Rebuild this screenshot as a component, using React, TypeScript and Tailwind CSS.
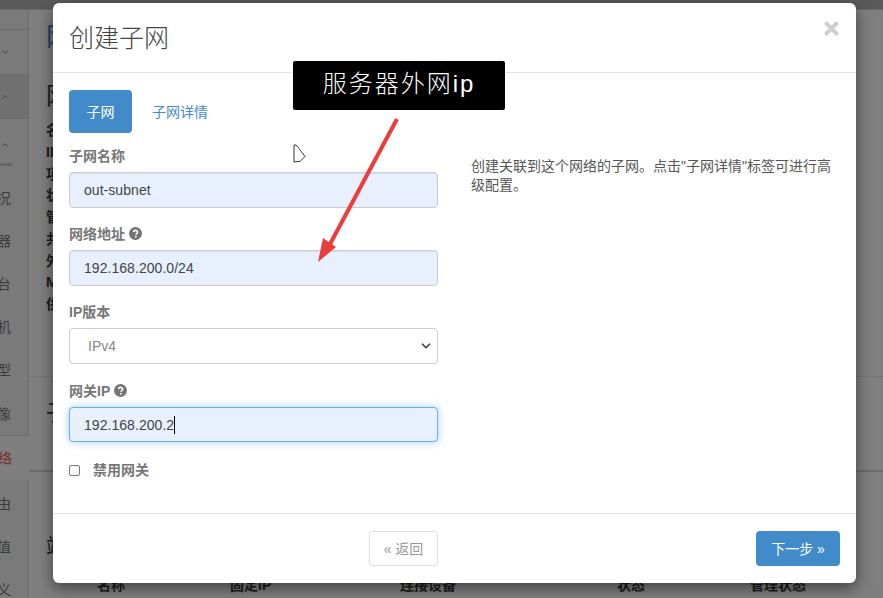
import React from 'react';
import { ChevronDown, ChevronUp } from 'lucide-react';

const font = 'font-["Liberation_Sans","Noto_Sans_CJK_SC",sans-serif]';

function HelpIcon() {
  return (
    <svg className="ml-1 inline-block h-[13px] w-[13px] align-[-1px]" viewBox="0 0 24 24">
      <circle cx="12" cy="12" r="12" fill="#737373" />
      <path d="M8.2 9.2a3.9 3.9 0 0 1 7.700.5c0 2.600-3 2.600-3 4.800" fill="none" stroke="#fff" strokeWidth="3" />
      <rect x="11" y="16.500" width="3" height="3" fill="#fff" />
    </svg>
  );
}

function Label({ text, help }: { text: string; help?: boolean }) {
  return (
    <label className="mb-[6px] block h-[20px] text-sm leading-[20px] font-bold text-[#777]">
      {text}
      {help && <HelpIcon />}
    </label>
  );
}

function Field({ label, help, value, focused }: { label: string; help?: boolean; value: string; focused?: boolean }) {
  return (
    <div className="mb-[16px]">
      <Label text={label} help={help} />
      <div
        className={
          focused
            ? 'flex h-[35px] items-center rounded-[4px] border border-[#66afe9] bg-[#e8f0fe] px-[14px] text-sm tracking-[0.05px] text-[#444] shadow-[0_0_8px_rgba(102,175,233,0.6)]'
            : 'flex h-[36px] items-center rounded-[4px] border border-[#ccc] bg-[#e8f0fe] px-[14px] text-sm tracking-[0.05px] text-[#444] shadow-[inset_0_1px_1px_rgba(0,0,0,0.075)]'
        }
      >
        {value}
        {focused && <span className="h-[18px] w-px bg-black" />}
      </div>
    </div>
  );
}

function Sidebar() {
  const items = ['概况', '服务器', '控制台', '云主机', '类型', '镜像'];
  const lower = ['路由', '配额值', '自定义'];
  return (
    <div className="flex w-[29px] shrink-0 flex-col overflow-hidden text-sm text-[#3c3c3c]">
      <div className="h-[20px] shrink-0 border-r border-b border-[#6c6c6c] bg-[#7a7a7a]" />
      <div className="flex h-[45px] shrink-0 items-center border-r border-b border-[#6c6c6c] bg-[#7a7a7a]">
        <ChevronDown size={10} />
      </div>
      <div className="flex h-[44px] shrink-0 items-center border-r border-b border-[#6c6c6c] bg-[#717171]">
        <ChevronUp size={10} />
      </div>
      <div className="h-[317px] shrink-0 border-r border-b border-[#6c6c6c] bg-[#7a7a7a]">
        <div className="flex h-[44px] items-center pt-[8px]">
          <ChevronUp size={10} />
        </div>
        <div className="mt-[0px] h-[3px] w-[12px] bg-[#666]" />
        <div className="h-[10px]" />
        {items.map((n) => (
          <div key={n} className="flex h-[43.200px] items-center justify-end pr-[17px]">
            <span className="whitespace-nowrap">{n}</span>
          </div>
        ))}
      </div>
      <div className="flex h-[44px] shrink-0 items-center justify-end pr-[17px] text-[#7a2a25]">
        <span className="whitespace-nowrap">网络</span>
      </div>
      <div className="flex-1 border-r border-[#6c6c6c] bg-[#7a7a7a] pt-[2px]">
        {lower.map((n) => (
          <div key={n} className="flex h-[43px] items-center justify-end pr-[17px]">
            <span className="whitespace-nowrap">{n}</span>
          </div>
        ))}
      </div>
    </div>
  );
}

function PageBehind() {
  const rows = ['名称', 'ID', '项目ID', '状态', '管理状态', '共享的', '外部网络', 'MTU', '供应商网络'];
  return (
    <div className="flex h-[598px] w-[883px] flex-col overflow-hidden bg-[#7f7f7f]">
      <div className="h-[10px] shrink-0 border-b border-[#6a6a6a] bg-[#5a5a5a]" />
      <div className="flex min-h-0 flex-1">
        <Sidebar />
        <div className="flex min-w-0 flex-1 flex-col text-[#1c1c1c]">
          <div className="h-[48px] shrink-0 pt-[12px] pl-[17px] text-[26px] leading-[30px] text-[#1d3f5e]">网络</div>
          <div className="h-[62px] shrink-0 pt-[23px] pl-[17px] text-[24px] leading-[30px]">网络概况</div>
          <div className="h-[257px] shrink-0 border-b border-[#757575] pl-[17px] text-sm leading-[21.750px] font-bold">
            {rows.map((r) => (
              <div key={r}>{r}</div>
            ))}
          </div>
          <div className="h-[95px] shrink-0 border-b-2 border-[#6c6c6c] pt-[21px] pl-[17px] text-[22px] leading-[30px]">
            子网
          </div>
          <div className="h-[103px] shrink-0 pt-[60px] pl-[17px] text-[22px] leading-[30px]">端口</div>
          <div className="flex pl-[68px] text-sm leading-[20px] font-bold">
            <div className="w-[133px]">名称</div>
            <div className="w-[170px]">固定IP</div>
            <div className="w-[217px]">连接设备</div>
            <div className="w-[133px]">状态</div>
            <div>管理状态</div>
          </div>
        </div>
      </div>
    </div>
  );
}

export default function App() {
  return (
    <div className={`relative h-[598px] w-[883px] overflow-hidden ${font}`}>
      <PageBehind />

      {/* modal */}
      <div className="absolute top-[3px] left-[53px] flex h-[580px] w-[803px] flex-col rounded-[6px] bg-white shadow-[0_5px_15px_rgba(0,0,0,0.5)]">
        <div className="flex h-[70px] shrink-0 items-center justify-between border-b border-[#e5e5e5] pr-[17px] pl-[16px]">
          <h4 className="mt-[1px] text-[25px] leading-[30px] font-light text-[#444]">创建子网</h4>
          <svg className="mb-[18px] h-[15px] w-[15px]" viewBox="0 0 15 15">
            <path d="M2.500 2.500 12.500 12.500M12.500 2.500 2.500 12.500" stroke="#cfcfcf" strokeWidth="4" strokeLinecap="round" />
          </svg>
        </div>

        <div className="flex min-h-0 flex-1 pt-[17px] pr-[16px] pl-[16px]">
          <div className="w-[369px] shrink-0">
            <div className="mb-[13px] flex items-center">
              <div className="flex h-[43px] w-[63px] items-center justify-center rounded-[4px] bg-[#428bca] text-sm text-white">
                子网
              </div>
              <div className="ml-[20px] text-sm text-[#428bca]">子网详情</div>
            </div>
            <Field label="子网名称" value="out-subnet" />
            <Field label="网络地址" help value="192.168.200.0/24" />
            <div className="mb-[17px]">
              <Label text="IP版本" />
              <div className="flex h-[36px] items-center justify-between rounded-[4px] border border-[#ccc] bg-white pr-[4px] pl-[18px] text-sm text-[#888]">
                IPv4
                <ChevronDown size={14} strokeWidth={3} className="text-[#444]" />
              </div>
            </div>
            <Field label="网关IP" help value="192.168.200.2" focused />
            <div className="mt-[18px] flex items-center text-sm font-bold text-[#777]">
              <span className="h-[11px] w-[11px] rounded-[2px] border border-[#767676] bg-white" />
              <span className="ml-[13px]">禁用网关</span>
            </div>
          </div>
          <div className="ml-[33px] w-[369px] pt-[67px] text-sm leading-[19px] text-[#555]">
            创建关联到这个网络的子网。点击"子网详情"标签可进行高级配置。
          </div>
        </div>

        <div className="flex h-[70px] shrink-0 items-center justify-end border-t border-[#e5e5e5] pr-[16px]">
          <div className="mr-[318px] flex h-[35px] w-[69px] items-center justify-center rounded-[4px] border border-[#ddd] bg-white text-sm text-[#999]">
            « 返回
          </div>
          <div className="flex h-[35px] w-[84px] items-center justify-center rounded-[4px] bg-[#428bca] text-sm text-white">
            下一步 »
          </div>
        </div>
      </div>

      {/* annotation over the screenshot */}
      <div className="absolute top-[61px] left-[293px] flex h-[49px] w-[212px] items-center justify-center rounded-[2px] bg-black pb-[4px] text-[24px] font-light tracking-[2px] text-white">
        服务器外网ip
      </div>
      <svg className="pointer-events-none absolute top-0 left-0 h-[598px] w-[883px]" viewBox="0 0 883 598">
        <path d="M397 119 329 246" stroke="#ec3d3d" strokeWidth="4" fill="none" />
        <path d="M318 262 323 238 336 247Z" fill="#ec3d3d" />
        <path d="M294 145v17l4-.500h2l5-5-6-8-3-3.500Z" fill="#fff" stroke="#333" strokeWidth="1" />
      </svg>
    </div>
  );
}
